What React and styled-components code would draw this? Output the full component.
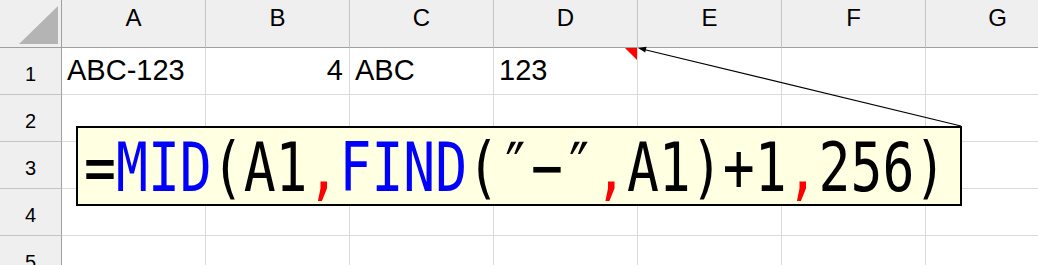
import React from 'react'
import styled, { createGlobalStyle } from 'styled-components'

const GlobalStyle = createGlobalStyle`
  html, body {
    margin: 0;
    padding: 0;
    background: #ffffff;
    overflow: hidden;
  }
`

const columns = ['A', 'B', 'C', 'D', 'E', 'F', 'G']
const rows = [1, 2, 3, 4, 5]

const cells = {
  A1: { text: 'ABC-123' },
  B1: { text: '4', align: 'right' },
  C1: { text: 'ABC' },
  D1: { text: '123', comment: true },
}

const formula = [
  { t: '=' },
  { t: 'MID', c: 'fn' },
  { t: '(A1' },
  { t: ',', c: 'sep' },
  { t: 'FIND', c: 'fn' },
  { t: '(\u2033\u2212\u2033' },
  { t: ',', c: 'sep' },
  { t: 'A1)+1' },
  { t: ',', c: 'sep' },
  { t: '256)' },
]

const App = () => {
  return (
    <Page>
      <GlobalStyle />
      <Sheet>
        <Corner />
        {columns.map((col) => (
          <ColHead key={col}>{col}</ColHead>
        ))}
        {rows.map((row) => (
          <React.Fragment key={row}>
            <RowHead>{row}</RowHead>
            {columns.map((col) => {
              const cell = cells[col + row]
              return (
                <Cell
                  key={col + row}
                  $align={cell ? cell.align : undefined}
                  $comment={cell && cell.comment}
                >
                  {cell ? cell.text : ''}
                </Cell>
              )
            })}
          </React.Fragment>
        ))}
      </Sheet>

      <Callout>
        <Formula>
          {formula.map((part, i) => (
            <Token key={i} $kind={part.c}>
              {part.t}
            </Token>
          ))}
        </Formula>
      </Callout>

      <Leader width='1038' height='265' viewBox='0 0 1038 265'>
        <line x1='961' y1='126' x2='644' y2='49.5' stroke='#000' strokeWidth='1.2' />
        <polygon points='638,48 646.5,46.8 645.2,52.6' fill='#000' />
      </Leader>
    </Page>
  )
}

export default App

const Page = styled.div`
  position: relative;
  width: 1038px;
  height: 265px;
  overflow: hidden;
`

const Sheet = styled.div`
  display: grid;
  grid-template-columns: 62px repeat(7, 144px);
  grid-template-rows: 48px repeat(5, 47px);
  width: 1070px;
`

const HeadBase = styled.div`
  box-sizing: border-box;
  background: #efefef;
  color: #000;
`

const Corner = styled(HeadBase)`
  position: relative;
  border-right: 1px solid #9f9f9f;
  border-bottom: 1px solid #9f9f9f;
  &::after {
    content: '';
    position: absolute;
    right: 3px;
    bottom: 3px;
    width: 39px;
    height: 38px;
    background: #b4b4b4;
    clip-path: polygon(100% 0, 100% 100%, 0 100%);
  }
`

const ColHead = styled(HeadBase)`
  display: flex;
  justify-content: center;
  padding-top: 6px;
  border-right: 1px solid #c4c4c4;
  border-bottom: 1px solid #9f9f9f;
  font-family: 'Liberation Sans', Arial, sans-serif;
  font-size: 24px;
  line-height: 24px;
`

const RowHead = styled(HeadBase)`
  display: flex;
  justify-content: center;
  padding-top: 16px;
  border-right: 1px solid #9f9f9f;
  border-bottom: 1px solid #c4c4c4;
  font-family: 'Liberation Sans', Arial, sans-serif;
  font-size: 20px;
  line-height: 20px;
`

const Cell = styled.div`
  position: relative;
  box-sizing: border-box;
  display: flex;
  justify-content: ${(p) => (p.$align === 'right' ? 'flex-end' : 'flex-start')};
  padding: 8px 6px 0 5px;
  border-right: 1px solid #dadada;
  border-bottom: 1px solid #dadada;
  font-family: 'Liberation Sans', Arial, sans-serif;
  font-size: 29px;
  line-height: 29px;
  color: #000;
  white-space: nowrap;
  &::after {
    content: '';
    display: ${(p) => (p.$comment ? 'block' : 'none')};
    position: absolute;
    top: 0;
    right: 0;
    width: 0;
    height: 0;
    border-top: 12px solid #ff0000;
    border-left: 12px solid transparent;
  }
`

const Callout = styled.div`
  position: absolute;
  left: 76px;
  top: 126px;
  box-sizing: border-box;
  width: 886px;
  height: 80px;
  padding: 6px 0 0 6px;
  border: 2px solid #000;
  background: #ffffe1;
  overflow: hidden;
`

const Formula = styled.div`
  display: inline-block;
  white-space: nowrap;
  font-family: 'DejaVu Sans Mono', 'Liberation Mono', monospace;
  font-size: 68px;
  line-height: 68px;
  transform: scaleX(0.78);
  transform-origin: left top;
`

const Token = styled.span`
  color: ${(p) => (p.$kind === 'fn' ? '#0000ff' : p.$kind === 'sep' ? '#ff0000' : '#000000')};
`

const Leader = styled.svg`
  position: absolute;
  left: 0;
  top: 0;
  pointer-events: none;
`
